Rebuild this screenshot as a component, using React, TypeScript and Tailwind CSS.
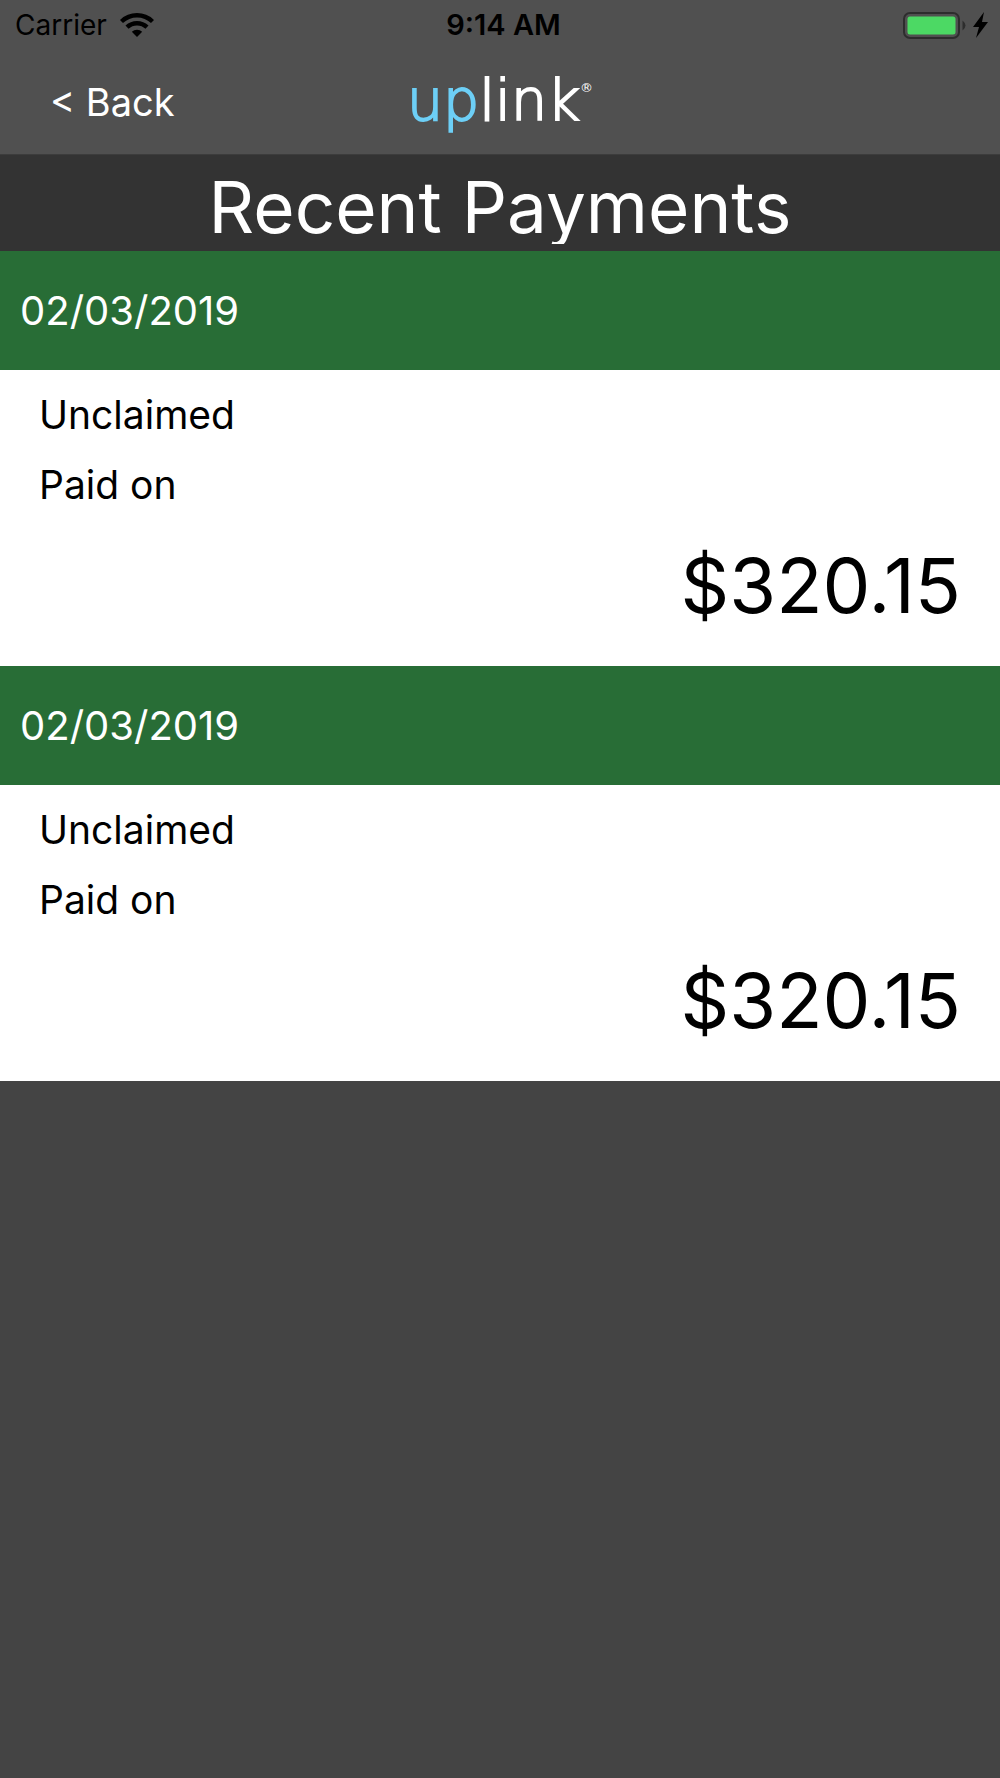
const payments = [
  { date: '02/03/2019', status: 'Unclaimed', paid: 'Paid on', amount: '$320.15' },
  { date: '02/03/2019', status: 'Unclaimed', paid: 'Paid on', amount: '$320.15' },
];

function WifiIcon() {
  return (
    <svg className="h-[26px] w-[36px]" viewBox="0 0 36 26" fill="none" stroke="#000" strokeWidth="4.4" aria-hidden="true">
      <path d="M2.500 9.500a22.500 22.500 0 0 1 31 0" />
      <path d="M8 15.200a14.500 14.500 0 0 1 20 0" />
      <path d="M18 25l-5.200-5.200a7.500 7.500 0 0 1 10.400 0z" fill="#000" stroke="none" />
    </svg>
  );
}

function BatteryIcon() {
  return (
    <svg className="h-[27px] w-[63px]" viewBox="0 0 63 27" aria-hidden="true">
      <rect x="1" y="1" width="55" height="25" rx="6" fill="none" stroke="#2d2d2d" strokeWidth="2" />
      <rect x="4.500" y="4.500" width="48" height="18" rx="2.500" fill="#4cd964" />
      <path d="M59.500 8.500q6 5 0 10z" fill="#2d2d2d" />
    </svg>
  );
}

export default function App() {
  return (
    <div className="flex min-h-screen flex-col bg-[#444444] font-['Inter',sans-serif] text-black">
      <header className="border-b border-[#3c3c3c] bg-[#505050]">
        <div className="grid h-[50px] grid-cols-3 items-center pr-3 pl-[15px]">
          <div className="flex items-center gap-3">
            <span className="text-[28px]">Carrier</span>
            <WifiIcon />
          </div>
          <span className="pl-1 text-center text-[29px] font-semibold">9:14 AM</span>
          <div className="flex items-center justify-end gap-[7px]">
            <BatteryIcon />
            <svg className="h-[26px] w-[15px]" viewBox="0 0 15 26" aria-hidden="true">
              <path d="M11 0 0 15h6L3 26 15 10H9z" />
            </svg>
          </div>
        </div>
        <nav className="grid h-[104px] grid-cols-3 items-center">
          <button className="pl-[50px] text-left text-[38px] text-white">&lt; Back</button>
          <div className="flex items-start justify-center pb-1 font-['DejaVu_Sans',sans-serif] text-white">
            <span className="text-[57px] leading-[64px] font-extralight [-webkit-text-stroke:2px]">
              <span className="text-[#6dcff6]">up</span>link
            </span>
            <span className="pt-3 text-[13px] leading-4">®</span>
          </div>
        </nav>
      </header>
      <div className="bg-[#333333] pt-[6px] pb-[7px]">
        <h1 className="h-[83px] overflow-hidden text-center text-[71px] leading-[92px] text-white">Recent Payments</h1>
      </div>
      <main>
        {payments.map((p, i) => (
          <section key={i} className="bg-white">
            <h2 className="bg-[#286d36] px-5 pt-[35px] pb-[34px] text-[40px] leading-[50px] text-white">{p.date}</h2>
            <div className="px-[39px] pt-5 pb-[35px] text-[39px]">
              <p className="leading-[50px]">{p.status}</p>
              <p className="mt-5 leading-[50px]">{p.paid}</p>
              <p className="mt-[30px] text-right text-[76px] leading-[91px]">{p.amount}</p>
            </div>
          </section>
        ))}
      </main>
    </div>
  );
}
